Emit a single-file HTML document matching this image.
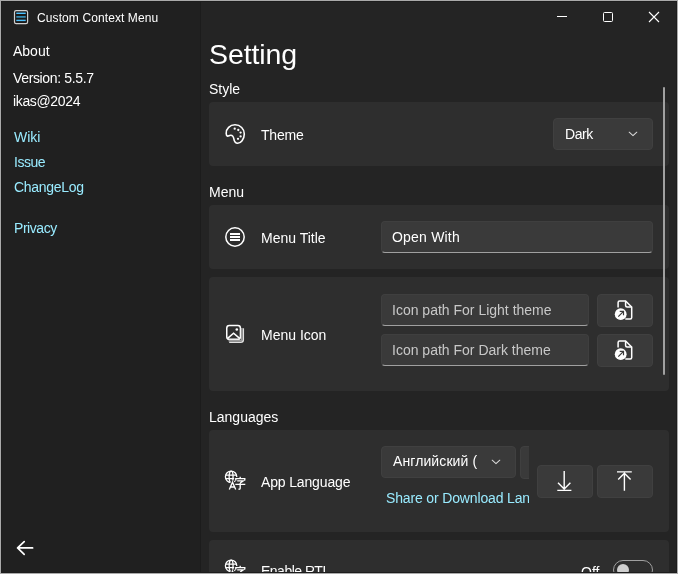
<!DOCTYPE html>
<html><head><meta charset="utf-8">
<style>
*{margin:0;padding:0;box-sizing:border-box}
html,body{width:678px;height:574px;overflow:hidden;background:#242424}
body{font-family:"Liberation Sans",sans-serif;color:#ffffff;position:relative}
.a{position:absolute;white-space:nowrap;will-change:transform}
#frame{position:absolute;left:0;top:0;width:678px;height:574px;border:1px solid #aaaaaa;z-index:50}
#frame2{position:absolute;left:1px;top:1px;width:676px;height:572px;border:1px solid #1d1d1d;z-index:49}
#pane{position:absolute;left:1px;top:1px;width:199px;height:572px;background:#202020}
#pline{position:absolute;left:200px;top:1px;width:1px;height:572px;background:#1c1c1c}
.t14{font-size:14px;line-height:16px}
.link{color:#99ebff}
.card{position:absolute;left:209px;width:460px;background:#2e2e2e;border-radius:4px}
.box{position:absolute;background:#3a3a3a;border:1px solid #404040;border-radius:4px}
.tb{position:absolute;background:#3a3a3a;border:1px solid #3f3f3f;border-bottom:1px solid #a0a0a0;border-radius:4px}
.ic{position:absolute;will-change:transform}
</style></head>
<body>
<div id="pane"></div>
<div id="pline"></div>

<!-- title bar -->
<svg class="ic" style="left:13px;top:10px" width="16" height="15" viewBox="0 0 16 15">
  <rect x="1.5" y="0.6" width="13.1" height="13" rx="1.6" fill="#1a1a1a" stroke="#d0d0d0" stroke-width="1.2"/>
  <rect x="3.3" y="2.6" width="9.4" height="1.4" fill="#4cc2ff"/>
  <rect x="3.3" y="6.2" width="9.4" height="1.4" fill="#3aa8d8"/>
  <rect x="3.3" y="9.7" width="9.4" height="1.4" fill="#4cc2ff"/>
</svg>
<div class="a" style="left:37px;top:11px;font-size:12px;line-height:14px;letter-spacing:0.1px">Custom Context Menu</div>

<!-- window buttons -->
<div class="a" style="left:557px;top:16px;width:10px;height:1px;background:#fff"></div>
<div class="a" style="left:603px;top:12px;width:10px;height:10px;border:1px solid #fff;border-radius:1.5px"></div>
<svg class="ic" style="left:648px;top:11px" width="12" height="12" viewBox="0 0 12 12"><path d="M1 1L11 11M11 1L1 11" stroke="#fff" stroke-width="1.1"/></svg>

<!-- left pane -->
<div class="a t14" style="left:13px;top:43px">About</div>
<div class="a t14" style="left:13px;top:70px;letter-spacing:-0.35px">Version: 5.5.7</div>
<div class="a t14" style="left:13px;top:93px;letter-spacing:-0.35px">ikas@2024</div>
<div class="a t14 link" style="left:14px;top:129px">Wiki</div>
<div class="a t14 link" style="left:14px;top:154px;letter-spacing:-0.5px">Issue</div>
<div class="a t14 link" style="left:14px;top:179px;letter-spacing:-0.3px">ChangeLog</div>
<div class="a t14 link" style="left:14px;top:220px;letter-spacing:-0.45px">Privacy</div>
<svg class="ic" style="left:15px;top:540px" width="20" height="16" viewBox="0 0 20 16"><path d="M2.6 7.9H17.6M2.6 7.9L9.2 1.6M2.6 7.9L9.2 14.4" stroke="#fff" stroke-width="1.7" stroke-linecap="round" stroke-linejoin="round" fill="none"/></svg>

<!-- main -->
<div class="a" style="left:209px;top:38px;font-size:28.5px;line-height:32px;letter-spacing:-0.1px">Setting</div>
<div class="a t14" style="left:209px;top:81px">Style</div>

<!-- card 1 -->
<div class="card" style="top:102px;height:64px"></div>
<svg class="ic" style="left:225px;top:124px" width="21" height="21" viewBox="0 0 21 21">
  <path d="M1.2 9.5C0.9 4.6 5 0.8 10 0.8C15.4 0.8 19.3 5 19.3 10C19.3 15.4 15.6 19.3 12.6 19.3C10.2 19.3 9.3 17.6 8.9 15.2C8.5 12.6 7.6 11.1 5.6 11.2C4.1 11.3 3.6 12.3 2.6 12.1C1.6 11.9 1.2 10.9 1.2 9.5Z" fill="none" stroke="#fff" stroke-width="1.6"/>
  <circle cx="9.7" cy="4.7" r="1.15" fill="#fff"/>
  <circle cx="13.3" cy="6" r="1.15" fill="#fff"/>
  <circle cx="15.6" cy="8.6" r="1.15" fill="#fff"/>
  <circle cx="15.6" cy="12.4" r="1.15" fill="#fff"/>
  <circle cx="13" cy="14.8" r="1.15" fill="#fff"/>
</svg>
<div class="a t14" style="left:261px;top:127px;letter-spacing:-0.2px">Theme</div>
<div class="box" style="left:553px;top:118px;width:100px;height:32px"></div>
<div class="a t14" style="left:565px;top:126px;letter-spacing:-0.4px">Dark</div>
<svg class="ic" style="left:628px;top:130px" width="10" height="7" viewBox="0 0 10 7"><path d="M1.2 2.2L5 5.7L8.8 2.2" stroke="#dadada" stroke-width="1.05" stroke-linecap="round" stroke-linejoin="round" fill="none"/></svg>

<!-- card 2 -->
<div class="a t14" style="left:209px;top:184px">Menu</div>
<div class="card" style="top:205px;height:64px"></div>
<svg class="ic" style="left:224px;top:226px" width="22" height="22" viewBox="0 0 22 22">
  <circle cx="11" cy="11" r="9.2" fill="none" stroke="#fff" stroke-width="1.5"/>
  <rect x="6" y="7" width="10" height="2" fill="#fff"/>
  <rect x="6" y="10" width="10" height="2" fill="#fff"/>
  <rect x="6" y="13" width="10" height="2" fill="#fff"/>
</svg>
<div class="a t14" style="left:261px;top:230px">Menu Title</div>
<div class="tb" style="left:381px;top:221px;width:272px;height:32px"></div>
<div class="a t14" style="left:392px;top:229px;letter-spacing:0.2px">Open With</div>

<!-- card 3 -->
<div class="card" style="top:277px;height:114px"></div>
<svg class="ic" style="left:224px;top:323px" width="22" height="22" viewBox="0 0 22 22">
  <path d="M5.2 19.3H16.8Q19.3 19.3 19.3 16.8V5.3" fill="none" stroke="#e0e0e0" stroke-width="1.5"/>
  <rect x="2.75" y="2.55" width="13.7" height="13.7" rx="2.6" fill="#2e2e2e" stroke="#fff" stroke-width="1.5"/>
  <rect x="4.5" y="16.8" width="13.5" height="1.7" fill="#9a9a9a"/>
  <rect x="16.9" y="5" width="1.7" height="12" fill="#9a9a9a"/>
  <path d="M3.6 15.4L9.6 10.3L15.6 15.4" fill="none" stroke="#fff" stroke-width="1.5"/>
  <circle cx="12.8" cy="6.5" r="1.3" fill="#fff"/>
</svg>
<div class="a t14" style="left:261px;top:327px">Menu Icon</div>
<div class="tb" style="left:381px;top:294px;width:208px;height:32px"></div>
<div class="a t14" style="left:392px;top:302px;color:#c8c8c8">Icon path For Light theme</div>
<div class="tb" style="left:381px;top:334px;width:208px;height:32px"></div>
<div class="a t14" style="left:392px;top:342px;color:#c8c8c8">Icon path For Dark theme</div>
<div class="box" style="left:597px;top:294px;width:56px;height:33px"></div>
<div class="box" style="left:597px;top:334px;width:56px;height:33px"></div>
<svg class="ic" style="left:608px;top:295px" width="32" height="30" viewBox="0 0 32 30">
  <path d="M10.1 12.5V7.4Q10.1 5.9 11.6 5.9H17.6L23.7 12V22.4Q23.7 23.9 22.2 23.9H17.3" fill="none" stroke="#fff" stroke-width="1.5"/>
  <path d="M17.6 6.2V10.5Q17.6 12 19.1 12H23.5" fill="none" stroke="#fff" stroke-width="1.5"/>
  <circle cx="12.7" cy="19.2" r="5.9" fill="#fff"/>
  <path d="M10.3 21.6L15.2 16.7M11.7 16.4H15.5V20.2" fill="none" stroke="#3a3a3a" stroke-width="1.2"/>
</svg>
<svg class="ic" style="left:608px;top:335px" width="32" height="30" viewBox="0 0 32 30">
  <path d="M10.1 12.5V7.4Q10.1 5.9 11.6 5.9H17.6L23.7 12V22.4Q23.7 23.9 22.2 23.9H17.3" fill="none" stroke="#fff" stroke-width="1.5"/>
  <path d="M17.6 6.2V10.5Q17.6 12 19.1 12H23.5" fill="none" stroke="#fff" stroke-width="1.5"/>
  <circle cx="12.7" cy="19.2" r="5.9" fill="#fff"/>
  <path d="M10.3 21.6L15.2 16.7M11.7 16.4H15.5V20.2" fill="none" stroke="#3a3a3a" stroke-width="1.2"/>
</svg>

<!-- card 4 -->
<div class="a t14" style="left:209px;top:409px">Languages</div>
<div class="card" style="top:430px;height:102px"></div>
<svg class="ic" style="left:218px;top:465px" width="34" height="34" viewBox="0 0 34 34">
  <g fill="none" stroke="#fff" stroke-width="1.3">
    <circle cx="13.1" cy="11.85" r="5.7"/>
    <ellipse cx="13.1" cy="11.85" rx="1.95" ry="5.7"/>
    <path d="M7.6 10.05H18.6M7.6 13.65H18.6"/>
  </g>
  <g fill="none" stroke="#2e2e2e" stroke-width="3.4" stroke-linejoin="round">
    <path d="M11.3 24.6L14.5 17.2L17.7 24.6M12.4 22H16.6"/>
    <path d="M22.2 11.8V13.2M17.8 15.5V13.6H26.8V15.5M19.2 15.9H25.2L22.2 18M22.2 18V23.3Q22.2 24.2 21 24.2H20.5M17.3 19.4H27.3"/>
  </g>
  <g fill="none" stroke="#fff" stroke-width="1.35">
    <path d="M11.3 24.6L14.5 17.2L17.7 24.6M12.4 22H16.6"/>
    <path d="M22.2 11.8V13.2M17.8 15.5V13.6H26.8V15.5M19.2 15.9H25.2L22.2 18M22.2 18V23.3Q22.2 24.2 21 24.2H20.5M17.3 19.4H27.3"/>
  </g>
</svg>
<div class="a t14" style="left:261px;top:474px;letter-spacing:-0.15px">App Language</div>
<div style="position:absolute;left:375px;top:440px;width:154px;height:80px;overflow:hidden">
  <div class="box" style="left:6px;top:6px;width:135px;height:32px"></div>
  <div class="a t14" style="left:18px;top:13px;width:85px;overflow:hidden;letter-spacing:0.1px">Английский (English)</div>
  <svg class="ic" style="left:116px;top:18px" width="10" height="7" viewBox="0 0 10 7"><path d="M1.2 2.2L5 5.7L8.8 2.2" stroke="#dadada" stroke-width="1.05" stroke-linecap="round" stroke-linejoin="round" fill="none"/></svg>
  <div class="box" style="left:145px;top:6px;width:40px;height:33px"></div>
  <div class="a t14 link" style="left:11px;top:50px;letter-spacing:-0.15px">Share or Download Language</div>
</div>
<div class="box" style="left:537px;top:465px;width:56px;height:33px"></div>
<div class="box" style="left:597px;top:465px;width:56px;height:33px"></div>
<svg class="ic" style="left:554px;top:468px" width="20" height="26" viewBox="0 0 20 26">
  <path d="M10.2 3V20.5M4 14.8L10.2 21L16.4 14.8M3.3 22.4H17.4" fill="none" stroke="#fff" stroke-width="1.4"/>
</svg>
<svg class="ic" style="left:614px;top:468px" width="20" height="26" viewBox="0 0 20 26">
  <path d="M10.4 5V22.8M4.2 11.4L10.4 5.2L16.6 11.4M3 3.9H17.8" fill="none" stroke="#fff" stroke-width="1.4"/>
</svg>

<!-- card 5 -->
<div class="card" style="top:540px;height:40px"></div>
<svg class="ic" style="left:218px;top:554px" width="34" height="34" viewBox="0 0 34 34">
  <g fill="none" stroke="#fff" stroke-width="1.3">
    <circle cx="13.1" cy="11.85" r="5.7"/>
    <ellipse cx="13.1" cy="11.85" rx="1.95" ry="5.7"/>
    <path d="M7.6 10.05H18.6M7.6 13.65H18.6"/>
  </g>
  <g fill="none" stroke="#2e2e2e" stroke-width="3.4" stroke-linejoin="round">
    <path d="M11.3 24.6L14.5 17.2L17.7 24.6M12.4 22H16.6"/>
    <path d="M22.2 11.8V13.2M17.8 15.5V13.6H26.8V15.5M19.2 15.9H25.2L22.2 18M22.2 18V23.3Q22.2 24.2 21 24.2H20.5M17.3 19.4H27.3"/>
  </g>
  <g fill="none" stroke="#fff" stroke-width="1.35">
    <path d="M11.3 24.6L14.5 17.2L17.7 24.6M12.4 22H16.6"/>
    <path d="M22.2 11.8V13.2M17.8 15.5V13.6H26.8V15.5M19.2 15.9H25.2L22.2 18M22.2 18V23.3Q22.2 24.2 21 24.2H20.5M17.3 19.4H27.3"/>
  </g>
</svg>
<div class="a t14" style="left:261px;top:563px;letter-spacing:-0.5px">Enable RTL</div>
<div class="a t14" style="left:581px;top:564px">Off</div>
<div class="a" style="left:613px;top:560px;width:40px;height:20px;border:1px solid #a0a0a0;border-radius:10px"></div>
<div class="a" style="left:617px;top:564px;width:12px;height:12px;background:#cfcfcf;border-radius:6px"></div>

<!-- scrollbar -->
<div class="a" style="left:663px;top:87px;width:2px;height:288px;background:#a0a0a0;border-radius:1px"></div>

<div id="frame2"></div>
<div id="frame"></div>
</body></html>
